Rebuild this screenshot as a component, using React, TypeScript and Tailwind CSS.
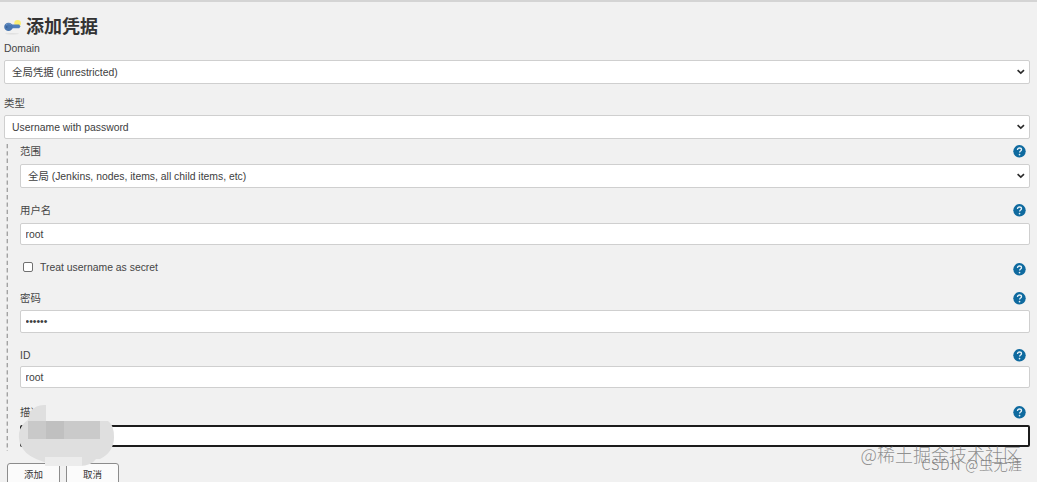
import type { ReactNode } from 'react';

const HelpIcon = () => (
  <svg width="13" height="13" viewBox="0 0 13 13" className="mr-[4px] shrink-0">
    <circle cx="6.5" cy="6.3" r="6.2" fill="#0f6a9f" />
    <path
      d="M4.5 4.9c0-1.2.9-1.9 2-1.9s2 .7 2 1.7c0 1.3-1.9 1.4-1.9 2.9"
      fill="none"
      stroke="#e6f1f7"
      strokeWidth="1.3"
    />
    <circle cx="6.55" cy="9.6" r="0.85" fill="#e6f1f7" />
  </svg>
);

const KeyIcon = () => (
  <svg width="18" height="18" viewBox="0 0 18 18" className="shrink-0">
    <ellipse cx="8" cy="15.8" rx="7" ry="0.7" fill="#e0e0e0" />
    <circle cx="13.6" cy="5.3" r="3.3" fill="#fbee72" />
    <path d="M7 6.6h8.2l1.3 1.8-1.3 1.9H7z" fill="#4f7fba" />
    <ellipse cx="4.5" cy="8.9" rx="4.3" ry="4.1" fill="#4876b0" />
    <path d="M2 7c1.3-1.6 4-1.7 5.4-.1" fill="none" stroke="#6f97c8" strokeWidth="1" />
    <circle cx="2.8" cy="9.1" r="0.8" fill="#31598f" />
  </svg>
);

const Select = ({ value }: { value: string }) => (
  <div className="relative h-[24px]">
    <select className="block h-full w-full appearance-none rounded-[2px] border border-[#cfcfcf] bg-white pt-px pl-[7px] text-[#404040] outline-none">
      <option>{value}</option>
    </select>
    <svg width="8" height="6" viewBox="0 0 8 6" className="pointer-events-none absolute top-[9px] right-[5px]">
      <path d="M0.6 1.2l3.2 3L7 1.2" fill="none" stroke="#2b2b2b" strokeWidth="1.6" />
    </svg>
  </div>
);

const Label = ({ children, help = true }: { children: ReactNode; help?: boolean }) => (
  <div className="flex h-[14px] items-center justify-between leading-[14px]">
    <span className="pt-[2px]">{children}</span>
    {help && <HelpIcon />}
  </div>
);

const inputStyle =
  'block w-full rounded-[2px] border border-[#cfcfcf] bg-white px-[4.5px] text-[#404040] outline-none';

const buttonStyle =
  'h-[24px] w-[53px] rounded-[3px] border border-[#8c8c8c] bg-[#fbfbfb] text-[9.5px] leading-[22px] text-[#333333]';

export default function App() {
  return (
    <div className="relative h-[482px] w-[1037px] overflow-hidden border-t-2 border-[#d4d4d4] bg-[#f1f1f1] pr-[7px] pl-[4px] font-['Liberation_Sans','Noto_Sans_CJK_SC',sans-serif] text-[10.4px] text-[#454545]">
      <h1 className="mt-[12px] flex h-[26px] items-center gap-[4px] text-[18px] font-bold text-[#333333]">
        <KeyIcon />
        添加凭据
      </h1>

      <div className="mt-[1px]">
        <Label help={false}>Domain</Label>
      </div>
      <div className="mt-[5px]">
        <Select value="全局凭据 (unrestricted)" />
      </div>

      <div className="mt-[12px]">
        <Label help={false}>类型</Label>
      </div>
      <div className="mt-[5px]">
        <Select value="Username with password" />
      </div>

      {/* Credential fields */}
      <div className="mt-[5px] flex h-[307px]">
        <svg width="2" height="307" className="ml-[2px] shrink-0">
          <line x1="1.3" y1="0" x2="1.3" y2="307" stroke="#a3a3a3" strokeWidth="1.4" strokeDasharray="4.3 3" />
        </svg>
        <div className="ml-[12px] flex-1">
          <Label>范围</Label>
          <div className="mt-[6px]">
            <Select value="全局 (Jenkins, nodes, items, all child items, etc)" />
          </div>

          <div className="mt-[15px]">
            <Label>用户名</Label>
          </div>
          <input className={`${inputStyle} mt-[6px] h-[22px]`} defaultValue="root" />

          <div className="mt-[16px] flex h-[14px] items-center justify-between">
            <label className="flex items-center">
              <input
                type="checkbox"
                className="mr-[7px] ml-[3px] h-[10px] w-[10px] -translate-y-px appearance-none rounded-[2px] border border-[#707070] bg-white"
              />
              Treat username as secret
            </label>
            <span className="mt-[3px]">
              <HelpIcon />
            </span>
          </div>

          <div className="mt-[16px]">
            <Label>密码</Label>
          </div>
          <input type="password" className={`${inputStyle} mt-[5px] h-[23px]`} defaultValue="secret" />

          <div className="mt-[15px]">
            <Label>ID</Label>
          </div>
          <input className={`${inputStyle} mt-[4px] h-[22px]`} defaultValue="root" />

          <div className="mt-[17px]">
            <Label>描述</Label>
          </div>
          <input className="mt-[6px] block h-[22px] w-full rounded-[2px] border-2 border-[#1c1c1c] bg-white px-[5px] outline-none" />
        </div>
      </div>

      <div className="mt-[12px] ml-[3px] flex gap-[6px]">
        <button className={buttonStyle}>添加</button>
        <button className={buttonStyle}>取消</button>
      </div>

      {/* Smudge over the description */}
      <svg width="100" height="64" viewBox="0 0 100 64" className="absolute top-[402px] left-[17px]">
        <path
          d="M13 8q6-8 16-7v16h62q6 4 6 16 0 15-14 22h-4q-5 7-16 7H46Q34 62 27 58 11 53 6 45 1 38 2 29 4 20 11 16z"
          fill="#dfdfdf"
        />
        <rect x="11" y="17" width="18" height="18" fill="#c9c9c9" />
        <rect x="29" y="17" width="18" height="18" fill="#c0c0c0" />
        <rect x="47" y="17" width="36" height="18" fill="#cacaca" />
        <rect x="28" y="53" width="37" height="9" fill="#ececec" />
      </svg>

      {/* Watermarks */}
      <div className="absolute top-[439px] right-[16px] font-['Noto_Sans_CJK_SC',sans-serif] text-[18px] leading-[26px] font-light whitespace-nowrap text-[#777777]/80">
        @稀土掘金技术社区
      </div>
      <div className="absolute top-[453px] right-[15px] font-['Noto_Sans_CJK_SC',sans-serif] text-[14.3px] leading-[18px] font-light whitespace-nowrap text-[#666666]/80">
        <span className="tracking-[0.8px]">CSDN @</span>虫无涯
      </div>
    </div>
  );
}
